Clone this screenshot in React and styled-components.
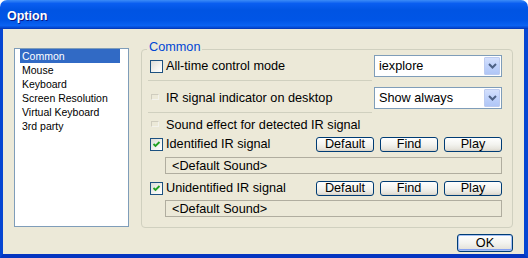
import React, { useState } from "react";
import styled, { createGlobalStyle } from "styled-components";

const GlobalStyle = createGlobalStyle`
  html, body {
    margin: 0;
    padding: 0;
    background: #ffffff;
    overflow: hidden;
  }
  body {
    font-family: "Liberation Sans", Arial, sans-serif;
  }
`;

const Window = styled.div`
  width: 528px;
  height: 258px;
  display: flex;
  flex-direction: column;
`;

const TitleBar = styled.div`
  flex: none;
  height: 29px;
  box-sizing: border-box;
  border-radius: 7px 7px 0 0;
  background: linear-gradient(
    to bottom,
    #3c8cf7 0%,
    #0a5ef0 12%,
    #0054e3 35%,
    #0055e6 70%,
    #0a62f2 88%,
    #0447d0 96%,
    #0332b0 100%
  );
  display: flex;
  align-items: center;
  padding: 2px 0 0 7px;
`;

const Title = styled.span`
  color: #ffffff;
  font: bold 12.5px "Liberation Sans", Arial, sans-serif;
  text-shadow: 1px 1px #0a1883;
`;

const Frame = styled.div`
  flex: 1;
  display: flex;
  flex-direction: column;
  background: #ece9d8;
  border-style: solid;
  border-color: #0646d2;
  border-width: 0 4px 4px 3px;
  border-bottom-color: #0535c0;
`;

const Content = styled.div`
  display: flex;
  gap: 12px;
  padding: 19px 11px 0 11px;
`;

const ListBox = styled.ul`
  width: 115px;
  height: 179px;
  box-sizing: border-box;
  margin: 0;
  padding: 0;
  list-style: none;
  border: 1px solid #7f9db9;
  background: #ffffff;
  font-size: 10.5px;
`;

const ListItem = styled.li`
  width: 100px;
  height: 14px;
  line-height: 14px;
  margin-left: 5px;
  padding-left: 2px;
  box-sizing: border-box;
  cursor: default;
  white-space: nowrap;
  color: ${(p) => (p.$selected ? "#ffffff" : "#000000")};
  background: ${(p) => (p.$selected ? "#316ac5" : "transparent")};
`;

const Group = styled.div`
  position: relative;
  width: 372px;
  height: 179px;
  box-sizing: border-box;
  margin-top: 1px;
  border: 1px solid #d0d0bf;
  border-radius: 4px;
  padding: 0 10px 0 8px;
  font-size: 12.7px;
`;

const Legend = styled.span`
  position: absolute;
  top: -10px;
  left: 5px;
  padding: 0 2px;
  line-height: 15px;
  background: #ece9d8;
  color: #0046d5;
`;

const Row = styled.div`
  display: flex;
  align-items: center;
  height: ${(p) => p.$h}px;
  margin-top: ${(p) => p.$mt}px;
`;

const CheckSlot = styled.span`
  flex: none;
  width: 13px;
  height: 13px;
  margin-right: 3px;
  display: flex;
  align-items: center;
  justify-content: center;
`;

const CheckBox = styled.span`
  width: 13px;
  height: 13px;
  box-sizing: border-box;
  border: 1px solid #1c5180;
  background: linear-gradient(135deg, #dcdcd7 0%, #f4f4f0 60%, #ffffff 100%);
  display: flex;
  align-items: center;
  justify-content: center;
`;

const DimBox = styled.span`
  width: 8px;
  height: 6px;
  margin: -3px 3px 0 0;
  box-sizing: border-box;
  border-style: solid;
  border-width: 1px;
  border-color: #cfccbe #f3f2ec #f3f2ec #cfccbe;
`;

const Label = styled.span`
  white-space: nowrap;
  color: #000000;
  line-height: 15px;
`;

const Combo = styled.div`
  margin-left: auto;
  width: 128px;
  height: 22px;
  box-sizing: border-box;
  border: 1px solid #7f9db9;
  background: #ffffff;
  display: flex;
  align-items: center;
  padding: 1px;
`;

const ComboText = styled.span`
  flex: 1;
  padding-left: 3px;
  white-space: nowrap;
`;

const ComboButton = styled.span`
  width: 16px;
  height: 18px;
  box-sizing: border-box;
  border: 1px solid #bccbf0;
  border-radius: 1px;
  background: linear-gradient(to bottom, #d4e0fc 0%, #c1d3fb 45%, #b0c6f6 100%);
  display: flex;
  align-items: center;
  justify-content: center;
`;

const Separator = styled.div`
  width: 224px;
  height: 1px;
  margin: 3px 0 0 -2px;
  background: #d0d0bf;
`;

const Buttons = styled.div`
  margin-left: auto;
  display: flex;
  gap: 6px;
`;

const Button = styled.button`
  width: ${(p) => p.$w || 58}px;
  height: ${(p) => p.$h || 15}px;
  box-sizing: border-box;
  padding: 0;
  border: 1px solid #003c74;
  border-radius: 3px;
  background: linear-gradient(to bottom, #ffffff 0%, #f3f3ef 50%, #e6e4dc 85%, #d6d0c5 100%);
  font: 12.7px "Liberation Sans", Arial, sans-serif;
  line-height: 13px;
  color: #000000;
  box-shadow: ${(p) => (p.$default ? "inset 0 0 0 1px #a4c0f4, inset 0 -1px 0 1px #86a2f2" : "none")};
`;

const SoundField = styled.div`
  height: 17px;
  margin: ${(p) => p.$mt}px 0 0 15px;
  box-sizing: border-box;
  border: 1px solid #b0ad9f;
  display: flex;
  align-items: center;
  padding-left: 6px;
  white-space: nowrap;
`;

const Footer = styled.div`
  display: flex;
  justify-content: flex-end;
  padding: 6px 11px 0 0;
`;

const Chevron = () => (
  <svg width="9" height="6" viewBox="0 0 9 6">
    <polyline points="1,1 4.5,4.5 8,1" fill="none" stroke="#4d6185" strokeWidth="2" />
  </svg>
);

const Check = () => (
  <svg width="9" height="9" viewBox="0 0 9 9">
    <polyline points="1.5,4 3.5,6 7.5,2" fill="none" stroke="#21a121" strokeWidth="1.8" />
  </svg>
);

const pages = ["Common", "Mouse", "Keyboard", "Screen Resolution", "Virtual Keyboard", "3rd party"];

const SoundRow = ({ label, checked, onToggle, mt }) => (
  <Row $h={15} $mt={mt}>
    <CheckSlot onClick={onToggle}>
      <CheckBox>{checked && <Check />}</CheckBox>
    </CheckSlot>
    <Label>{label}</Label>
    <Buttons>
      <Button>Default</Button>
      <Button>Find</Button>
      <Button>Play</Button>
    </Buttons>
  </Row>
);

export default function App() {
  const [page, setPage] = useState("Common");
  const [allTime, setAllTime] = useState(false);
  const [identified, setIdentified] = useState(true);
  const [unidentified, setUnidentified] = useState(true);

  return (
    <Window>
      <GlobalStyle />
      <TitleBar>
        <Title>Option</Title>
      </TitleBar>
      <Frame>
        <Content>
          <ListBox>
            {pages.map((p) => (
              <ListItem key={p} $selected={p === page} onClick={() => setPage(p)}>
                {p}
              </ListItem>
            ))}
          </ListBox>
          <Group>
            <Legend>Common</Legend>
            <Row $h={22} $mt={5}>
              <CheckSlot onClick={() => setAllTime(!allTime)}>
                <CheckBox>{allTime && <Check />}</CheckBox>
              </CheckSlot>
              <Label>All-time control mode</Label>
              <Combo>
                <ComboText>iexplore</ComboText>
                <ComboButton>
                  <Chevron />
                </ComboButton>
              </Combo>
            </Row>
            <Separator />
            <Row $h={22} $mt={6}>
              <CheckSlot>
                <DimBox />
              </CheckSlot>
              <Label>IR signal indicator on desktop</Label>
              <Combo>
                <ComboText>Show always</ComboText>
                <ComboButton>
                  <Chevron />
                </ComboButton>
              </Combo>
            </Row>
            <Separator />
            <Row $h={16} $mt={4}>
              <CheckSlot>
                <DimBox />
              </CheckSlot>
              <Label>Sound effect for detected IR signal</Label>
            </Row>
            <SoundRow
              label="Identified IR signal"
              checked={identified}
              onToggle={() => setIdentified(!identified)}
              mt={4}
            />
            <SoundField $mt={5}>&lt;Default Sound&gt;</SoundField>
            <SoundRow
              label="Unidentified IR signal"
              checked={unidentified}
              onToggle={() => setUnidentified(!unidentified)}
              mt={7}
            />
            <SoundField $mt={4}>&lt;Default Sound&gt;</SoundField>
          </Group>
        </Content>
        <Footer>
          <Button $w={56} $h={18} $default>
            OK
          </Button>
        </Footer>
      </Frame>
    </Window>
  );
}
